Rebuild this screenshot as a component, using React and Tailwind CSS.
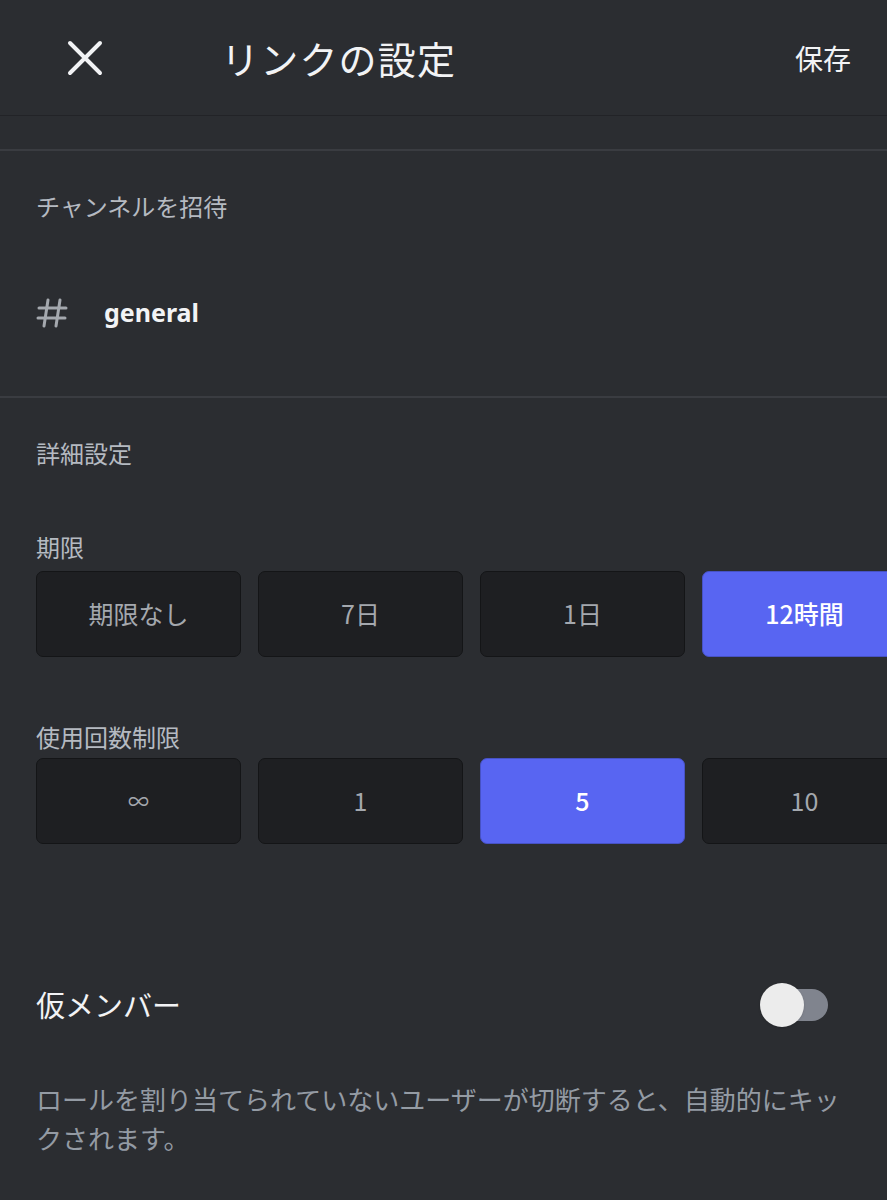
import React, { useState } from 'react';

const jp = { fontFamily: '"Noto Sans CJK JP", "Noto Sans", sans-serif' };

function OptionRow({ options, active, onSelect }) {
  return (
    <div className="flex gap-[17px] w-[1000px]">
      {options.map((opt, i) => (
        <button
          key={opt}
          onClick={() => onSelect(i)}
          className={`w-[205px] h-[86px] shrink-0 rounded-[7px] border flex items-center justify-center ${
            opt === '∞' ? 'text-[21px]' : 'text-[25px]'
          } ${
            active === i
              ? 'bg-[#5865f2] border-[#4752c4] text-white font-medium'
              : 'bg-[#1e1f22] border-[#141517] text-[#a4a8ae]'
          }`}
        >
          {opt}
        </button>
      ))}
    </div>
  );
}

export default function App() {
  const [expire, setExpire] = useState(3);
  const [uses, setUses] = useState(2);
  const [temp, setTemp] = useState(false);

  return (
    <div className="w-[887px] h-[1200px] bg-[#2b2d31] overflow-hidden text-white" style={jp}>
      {/* Header */}
      <div className="h-[116px] flex items-center border-b border-[#222327]">
        <button className="ml-[66px] w-[38px] h-[38px] flex items-center justify-center">
          <svg width="36" height="36" viewBox="0 0 36 36" fill="none" stroke="#f2f3f5" strokeWidth="4" strokeLinecap="round">
            <path d="M3 3L33 33M33 3L3 33" />
          </svg>
        </button>
        <h1 className="ml-[117px] text-[38px] font-normal tracking-[1.2px] text-[#f2f3f5]">リンクの設定</h1>
        <button className="ml-auto mr-[36px] text-[28px] text-[#f2f3f5]">保存</button>
      </div>
      <div className="h-[35px] border-b-2 border-[#3a3c41]" />

      {/* Channel */}
      <div className="px-[36px] pt-[39px] h-[247px] border-b-2 border-[#3a3c41]">
        <p className="text-[24px] leading-[32px] text-[#b5bac1]">チャンネルを招待</p>
        <div className="flex items-center mt-[72px]">
          <svg width="32" height="30" viewBox="0 0 32 30" fill="none" stroke="#a4a8ae" strokeWidth="3" strokeLinecap="round">
            <path d="M12 2L8 28M24 2L20 28M3 10H30M2 20H29" />
          </svg>
          <span className="ml-[36px] text-[25px] font-bold text-[#f2f3f5]" style={{ fontFamily: '"Noto Sans", sans-serif' }}>
            general
          </span>
        </div>
      </div>

      {/* Advanced */}
      <div className="pl-[36px] pt-[39px]">
        <p className="text-[24px] leading-[32px] text-[#b5bac1]">詳細設定</p>
        <p className="mt-[62px] text-[24px] leading-[32px] text-[#b5bac1]">期限</p>
        <div className="mt-[8px]">
          <OptionRow options={['期限なし', '7日', '1日', '12時間']} active={expire} onSelect={setExpire} />
        </div>
        <p className="mt-[64px] text-[24px] leading-[32px] text-[#b5bac1]">使用回数制限</p>
        <div className="mt-[5px]">
          <OptionRow options={['∞', '1', '5', '10']} active={uses} onSelect={setUses} />
        </div>
      </div>

      {/* Temporary member */}
      <div className="px-[36px] mt-[137px]">
        <div className="flex items-center justify-between h-[48px] pr-[23px]">
          <span className="text-[29px] text-[#f2f3f5]">仮メンバー</span>
          <button onClick={() => setTemp(!temp)} className="relative w-[68px] h-[44px] flex items-center">
            <span className={`absolute right-0 w-[52px] h-[32px] rounded-full ${temp ? 'bg-[#23a55a]' : 'bg-[#80848e]'}`} />
            <span className={`absolute w-[44px] h-[44px] rounded-full bg-[#ececec] shadow ${temp ? 'left-[24px]' : 'left-0'}`} />
          </button>
        </div>
        <p className="mt-[50px] text-[26px] leading-[39px] text-[#949ba4]">
          ロールを割り当てられていないユーザーが切断すると、自動的にキックされます。
        </p>
      </div>
    </div>
  );
}
